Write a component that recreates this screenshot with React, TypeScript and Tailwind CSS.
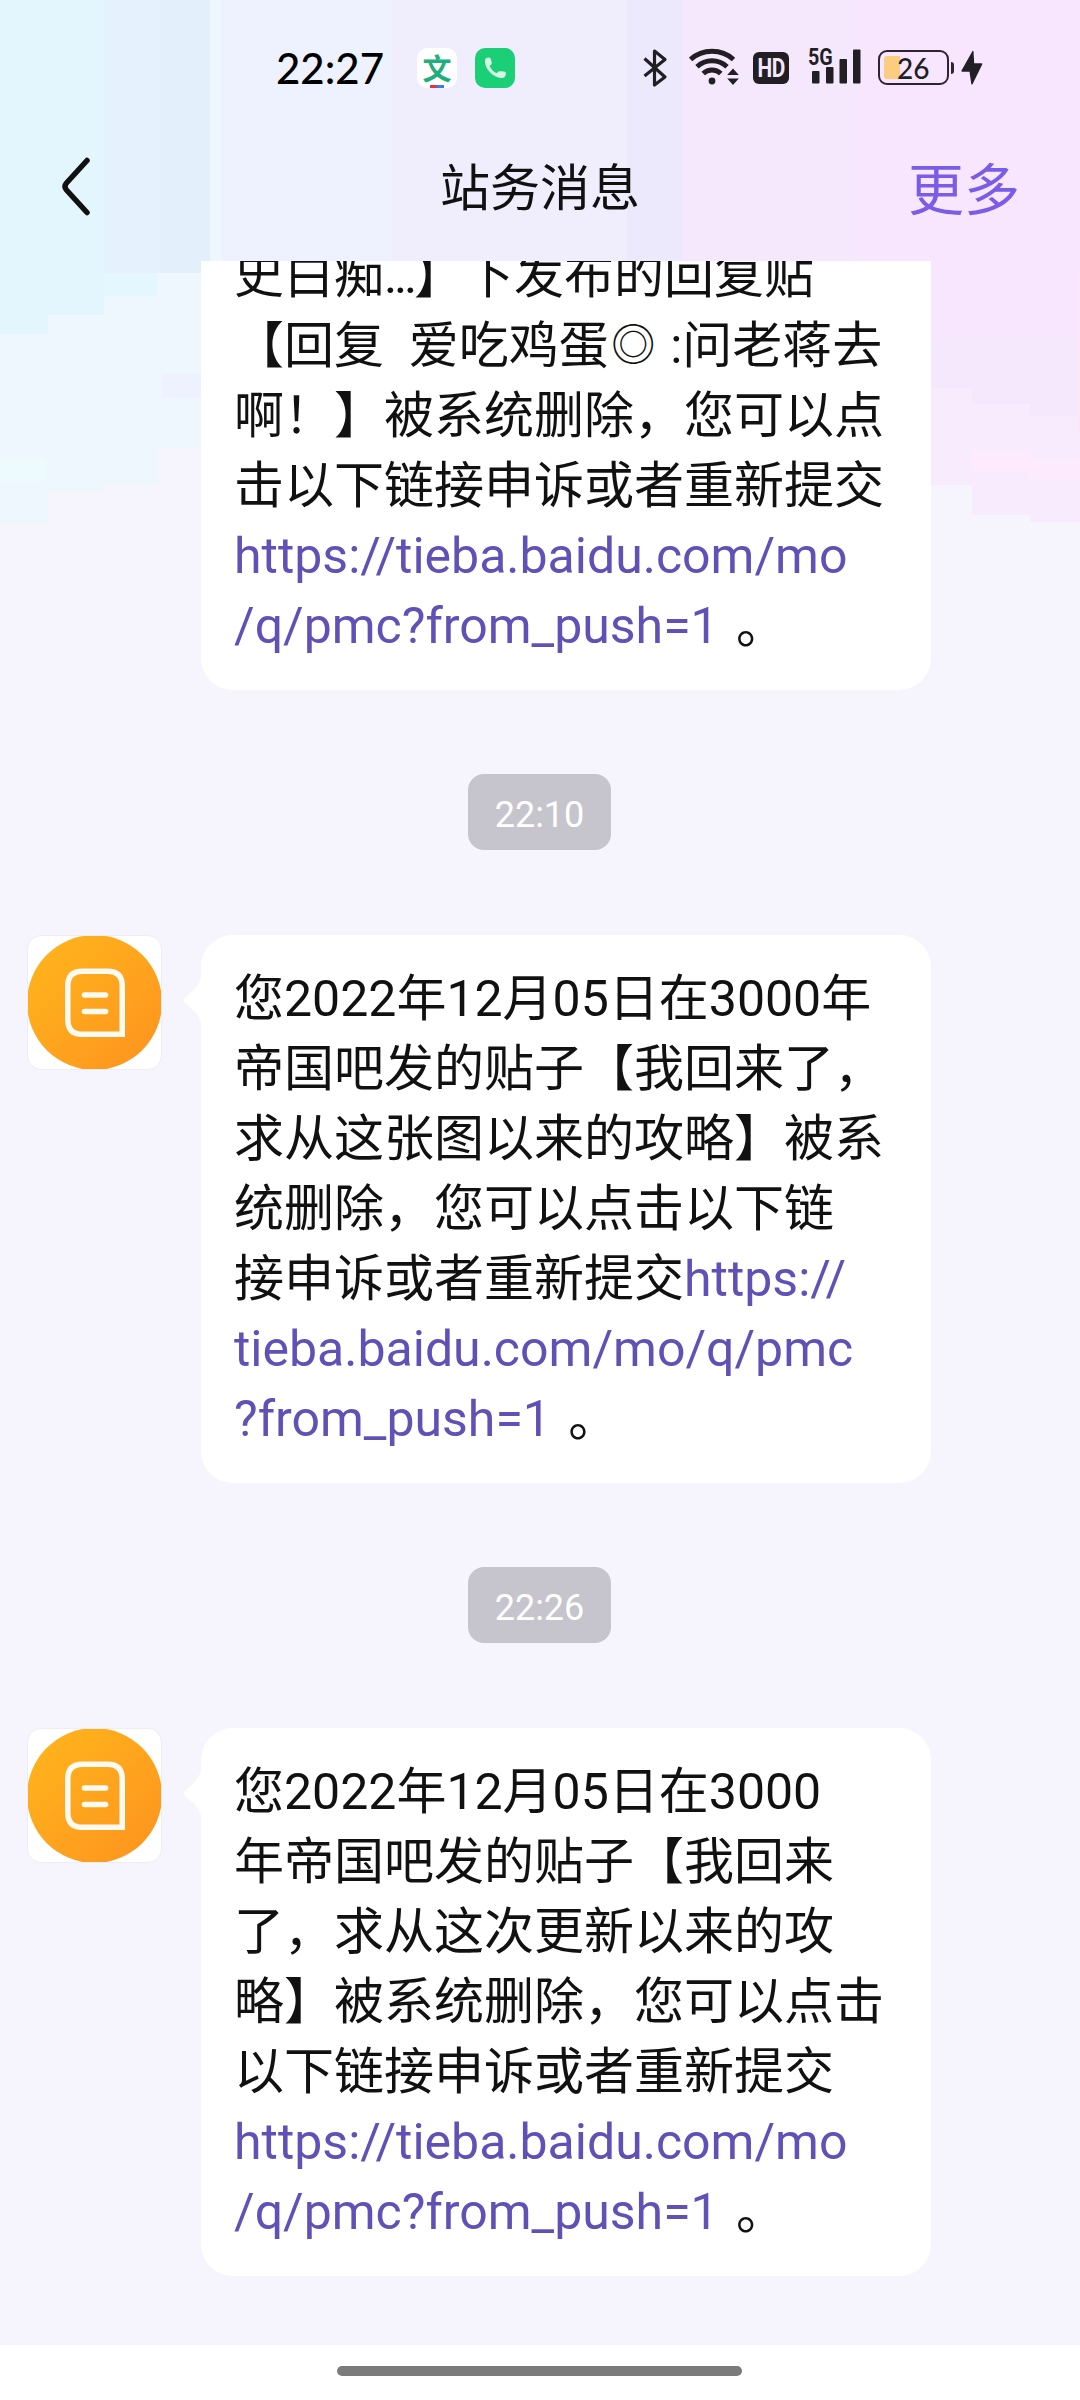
import { ReactNode } from "react";

type Block = [x: number, y: number, w: number, h: number, fill: string];

// pale blue on the left fading to pink on the right, drawn as stepped blocks
const blocks: Block[] = [
  [0, 0, 221, 600, "#eef6fe"],
  [221, 0, 171, 300, "#eef2fe"],
  [392, 0, 235, 300, "#f0edfd"],
  [627, 0, 55, 300, "#ece9fc"],
  [682, 0, 176, 300, "#f6e8fc"],
  [858, 0, 222, 400, "#f7e6fd"],
  [0, 0, 104, 315, "#e3f6fe"],
  [48, 315, 200, 20, "#eef6fe"],
  [0, 315, 48, 19, "#e3f6fe"],
  [104, 0, 58, 273, "#e5f1fd"],
  [104, 273, 53, 23, "#e4f6fe"],
  [160, 0, 50, 273, "#e3f0fc"],
  [162, 374, 50, 24, "#eef1fe"],
  [0, 460, 46, 21, "#edfbfe"],
  [0, 524, 48, 90, "#f6f5fe"],
  [48, 492, 56, 120, "#f6f5fe"],
  [104, 485, 54, 120, "#f6f5fe"],
  [158, 448, 60, 160, "#f6f5fe"],
  [930, 338, 150, 80, "#f5e8fd"],
  [930, 388, 42, 97, "#f7ebfd"],
  [972, 404, 58, 111, "#f7ebfd"],
  [1030, 416, 50, 106, "#f7ebfd"],
  [972, 450, 58, 21, "#fdeafc"],
  [1030, 460, 50, 20, "#fdeafc"],
  [1077, 272, 3, 160, "#fde6f8"],
];

const LINK = "https://tieba.baidu.com/mo/q/pmc?from_push=1";

function Link({ children }: { children: ReactNode }) {
  return (
    <a href={LINK} className="text-[#6151b6]">
      {children}
    </a>
  );
}

function FullStop() {
  return <span className="ml-[5px]"> 。</span>;
}

export default function App() {
  return (
    <div className="relative isolate flex h-[2400px] w-[1080px] flex-col overflow-hidden bg-[#f6f5fe] font-[Roboto,'Noto_Sans_CJK_SC',sans-serif] text-[#111]">
      <Backdrop />
      <StatusBar />
      <TitleBar />

      <main className="flex h-[2084px] shrink-0 flex-col overflow-hidden">
        <div className="-mt-[20px] ml-[201px] w-[730px] shrink-0 rounded-b-[32px] bg-white pb-[29px] pl-[33px]">
          <Lines
            lines={[
              <>
                史白痴<span className="tracking-[-3.200px]">...</span>】下发布的回复贴
              </>,
              <>
                【回复  爱吃鸡蛋
                <span className="inline-block w-[49px] text-center align-top text-[44px]">◎</span>
                {" :问老蒋去"}
              </>,
              "啊！】被系统删除，您可以点",
              "击以下链接申诉或者重新提交",
              <Link>https://tieba.baidu.com/mo</Link>,
              <>
                <Link>/q/pmc?from_push=1</Link>
                <FullStop />
              </>,
            ]}
          />
        </div>

        <TimeChip time="22:10" />
        <Message
          lines={[
            "您2022年12月05日在3000年",
            "帝国吧发的贴子【我回来了，",
            "求从这张图以来的攻略】被系",
            "统删除，您可以点击以下链",
            <>
              接申诉或者重新提交<Link>https://</Link>
            </>,
            <Link>tieba.baidu.com/mo/q/pmc</Link>,
            <>
              <Link>?from_push=1</Link>
              <FullStop />
            </>,
          ]}
        />

        <TimeChip time="22:26" />
        <Message
          lines={[
            "您2022年12月05日在3000",
            "年帝国吧发的贴子【我回来",
            "了，求从这次更新以来的攻",
            "略】被系统删除，您可以点击",
            "以下链接申诉或者重新提交",
            <Link>https://tieba.baidu.com/mo</Link>,
            <>
              <Link>/q/pmc?from_push=1</Link>
              <FullStop />
            </>,
          ]}
        />
      </main>

      <div className="flex grow justify-center bg-white pr-[2px] pt-[21px]">
        <div className="h-[10px] w-[405px] rounded-full bg-[#7b7b7b]" />
      </div>
    </div>
  );
}

function Backdrop() {
  return (
    <svg
      className="absolute left-0 top-0 -z-10"
      width="1080"
      height="620"
      shapeRendering="crispEdges"
    >
      {blocks.map(([x, y, w, h, fill], i) => (
        <rect key={i} x={x} y={y} width={w} height={h} fill={fill} />
      ))}
    </svg>
  );
}

function StatusBar() {
  return (
    <div className="flex h-[136px] shrink-0 items-center pl-[276px] text-[#221f24]">
      <span className="w-[141px] font-[Lato,sans-serif] text-[42px] font-medium leading-none text-black">
        22:27
      </span>
      <div className="mr-[18px] flex size-[40px] flex-col items-center justify-between rounded-[10px] bg-white">
        <span className="mt-[3px] font-['Noto_Sans_CJK_SC',sans-serif] text-[29px] font-bold leading-[32px] text-[#1fae7c]">
          文
        </span>
        <span className="flex h-[3px] w-[14px] overflow-hidden">
          <i className="w-1/2 bg-[#e0383e]" />
          <i className="w-1/2 bg-[#3f7be8]" />
        </span>
      </div>
      <div className="mr-[128px] flex size-[40px] items-center justify-center rounded-[10px] bg-[#1bcf76]">
        <svg width="24" height="24" viewBox="0 0 24 24" fill="#d6f7e6">
          <path d="M2 4.500C2.300 2.500 3.700 1.600 5.500 1.600c1.300 0 2.200.8 2.500 2l.6 2.600c.3 1.200 0 2.100-.9 2.900L6.600 10c1.300 3 3.900 5.800 7 7.200l1.300-1.200c.6-.6 1.400-.9 2.400-.8l3.700.3c1.300.1 2 1 1.900 2.200-.2 2.700-1.800 4.400-4.200 4.300C10.500 21.700 1.500 13 2 4.500Z" />
        </svg>
      </div>

      <svg className="mr-[21px]" width="25" height="40" viewBox="0 0 25 40" fill="none" stroke="currentColor" strokeWidth="3.200" strokeLinejoin="round">
        <path d="M1.500 10.500 22 29l-10.500 8V3L22 11.500 1.500 28" />
      </svg>
      <svg className="mr-[14px]" width="50" height="40" viewBox="0 0 50 40" fill="none" stroke="currentColor" strokeWidth="5">
        <path d="M1.500 11.500c12-11 31-11 43 0M8 18.700c8.500-8 21.500-8 30 0M14.200 25.500c5-4.800 12.600-4.800 17.600 0" />
        <circle cx="23" cy="33" r="3.400" fill="currentColor" stroke="none" />
        <path d="M44 20.500l5.800 6.500H38.200zM44 37l-5.800-6.500h11.600z" fill="currentColor" stroke="none" />
      </svg>
      <span className="mr-[19px] flex h-[32px] w-[36px] items-center justify-center rounded-[6px] bg-[#221f24] text-[#f6e8fc]">
        <span className="scale-x-[0.800] text-[26px] font-bold leading-none tracking-[-0.500px]">HD</span>
      </span>
      <div className="relative mr-[17px] h-[40px] w-[53px]">
        <span className="absolute -top-[3px] left-0 origin-left scale-x-[0.820] text-[24px] font-bold leading-[24px]">
          5G
        </span>
        <svg width="53" height="40" viewBox="0 0 53 40" fill="currentColor">
          <rect x="4" y="23" width="7.500" height="12.500" rx="1" />
          <rect x="18" y="19" width="7.500" height="16.500" rx="1" />
          <rect x="31.500" y="11" width="7.500" height="24.500" rx="1" />
          <rect x="45" y="1.500" width="7.500" height="34" rx="1" />
        </svg>
      </div>
      <div className="flex h-[35px] w-[71px] items-center rounded-[9px] border-[2.500px] border-[#2e2530] pl-[4px] -mt-[1px]">
        <div className="h-[23px] w-[16px] rounded-l-[3px] bg-[#fbcd80]" />
        <span className="-ml-[3px] font-[Lato,sans-serif] text-[28px] font-medium leading-none">26</span>
      </div>
      <div className="ml-[2px] mr-[8px] h-[12px] w-[3px] rounded-r bg-[#2e2530]" />
      <svg className="-ml-[1px]" width="22" height="36" viewBox="0 0 22 36" fill="currentColor">
        <path d="M11.500 1 .5 20.500q-.5 1.200.8 1.200h7.200L10.300 34q.6 1 1.200.2L21.200 14.500q.5-1.300-.8-1.300h-7.200L12.500 1.300q-.5-.8-1-.3Z" />
      </svg>
    </div>
  );
}

function TitleBar() {
  return (
    <header className="grid h-[125px] shrink-0 grid-cols-[1fr_auto_1fr] items-center pb-[19px] pl-[60px] pr-[60px]">
      <svg className="-mt-[4px]" width="34" height="64" viewBox="0 0 34 64" fill="none" stroke="#111" strokeWidth="5.500" strokeLinecap="round">
        <path d="M27 5.500 6.500 28q-3 3.500 0 7L27 57.500" />
      </svg>
      <h1 className="text-[50px] leading-[70px]">站务消息</h1>
      <button className="mt-[3px] justify-self-end text-[56px] leading-[70px] text-[#7a5ce6]">
        更多
      </button>
    </header>
  );
}

function TimeChip({ time }: { time: string }) {
  return (
    <time className="mb-[85px] mr-[1px] mt-[84px] flex h-[76px] w-[143px] shrink-0 items-center justify-center self-center rounded-[16px] bg-[#c6c4cd] pt-[5px] text-[36px] leading-none text-white">
      {time}
    </time>
  );
}

function Message({ lines }: { lines: ReactNode[] }) {
  return (
    <div className="flex shrink-0 items-start pl-[27px]">
      <Avatar />
      <svg className="ml-[22px] mt-[42px]" width="18" height="46" viewBox="0 0 18 46" fill="#fff">
        <path d="M18 0v46c-2-9-7-12-15-19q-4-3.500 0-7c8-7 13-11 15-20Z" />
      </svg>
      <div className="w-[730px] rounded-[32px] bg-white py-[29px] pl-[33px]">
        <Lines lines={lines} />
      </div>
    </div>
  );
}

function Lines({ lines }: { lines: ReactNode[] }) {
  return (
    <>
      {lines.map((line, i) => (
        <p
          key={i}
          className="h-[70px] whitespace-pre text-[50px] leading-[70px] [text-spacing-trim:space-all]"
        >
          {line}
        </p>
      ))}
    </>
  );
}

function Avatar() {
  return (
    <div className="size-[135px] -mr-[1px] overflow-hidden rounded-[14px] border border-[#efedf4] bg-white">
      <svg className="-m-px" width="135" height="135" viewBox="0 0 134 134">
        <defs>
          <linearGradient id="orange" x1="0" y1="0" x2="1" y2="1">
            <stop offset="0.100" stopColor="#ffb31c" />
            <stop offset="0.900" stopColor="#fe961f" />
          </linearGradient>
        </defs>
        <circle cx="67" cy="67" r="67" fill="url(#orange)" />
        <g fill="none" stroke="#fffaf0" strokeWidth="5.500">
          <path d="M94.500 98.500H55q-14.500 0-14.500-14.500V50.500q0-14.500 14.500-14.500h25q14.500 0 14.500 14.500Z" />
          <path d="M57 59.500h21M57 76h21" strokeLinecap="round" />
        </g>
      </svg>
    </div>
  );
}
